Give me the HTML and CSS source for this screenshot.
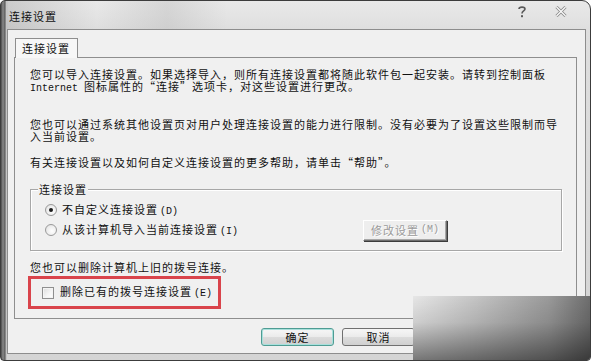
FILE: index.html
```html
<!DOCTYPE html>
<html lang="zh">
<head>
<meta charset="utf-8">
<title>连接设置</title>
<link rel="stylesheet" href="styles.css">
</head>
<body>
<div class="window">
  <div class="titlebar">
    <span class="title">连接设置</span>
    <div class="caption-btns">
      <svg class="help" width="10" height="13" viewBox="0 0 10 13"><path d="M2 4 C2 1.5 8 1.5 8 4 C8 6 5 6 5 8.5" fill="none" stroke="#5a5a5a" stroke-width="1.6"/><rect x="4" y="10.2" width="2" height="2" fill="#5a5a5a"/></svg>
      <svg class="close" width="12" height="11" viewBox="0 0 12 11"><path d="M1.5 1 L10.5 10 M10.5 1 L1.5 10" stroke="#8a8a8a" stroke-width="3"/><path d="M1.5 1 L10.5 10 M10.5 1 L1.5 10" stroke="#fafafa" stroke-width="1.3"/></svg>
    </div>
  </div>
  <div class="client">
    <div class="tabs">
      <div class="tab">连接设置</div>
    </div>
    <div class="page">
      <p class="para p1">您可以导入连接设置。如果选择导入，则所有连接设置都将随此软件包一起安装。请转到控制面板<br><span class="latin">Internet </span>图标属性的“连接”选项卡，对这些设置进行更改。</p>
      <p class="para p2">您也可以通过系统其他设置页对用户处理连接设置的能力进行限制。没有必要为了设置这些限制而导<br>入当前设置。</p>
      <p class="para p3">有关连接设置以及如何自定义连接设置的更多帮助，请单击“帮助”。</p>
      <div class="group">
        <span class="group-title">连接设置</span>
        <div class="row row1">
          <span class="radio checked"></span>
          <span class="label">不自定义连接设置<span class="key">(D)</span></span>
        </div>
        <div class="row row2">
          <div class="radio-cell">
            <span class="radio"></span>
            <span class="label">从该计算机导入当前连接设置<span class="key">(I)</span></span>
          </div>
          <div class="btn3d">修改设置<span class="key">(M)</span></div>
        </div>
      </div>
      <p class="para p4">您也可以删除计算机上旧的拨号连接。</p>
      <div class="redbox">
        <span class="checkbox"></span>
        <span class="label">删除已有的拨号连接设置<span class="key">(E)</span></span>
      </div>
    </div>
    <div class="buttons">
      <div class="btn default">确定</div>
      <div class="btn">取消</div>
    </div>
  </div>
  <div class="smear"></div>
</div>
</body>
</html>
```
FILE: styles.css
```css
html, body {
  margin: 0;
  padding: 0;
}
body {
  width: 593px;
  height: 361px;
  overflow: hidden;
  background: #ffffff;
  font-family: "Noto Sans CJK SC", "Noto Sans", sans-serif;
  font-size: 11px;
  letter-spacing: 1px;
  color: #111;
}
.window {
  box-sizing: border-box;
  width: 591px;
  height: 361px;
  border: 1px solid #3c3c3c;
  border-radius: 5px 9px 4px 4px;
  padding: 0 4px 6px 6px;
  display: flex;
  flex-direction: column;
  position: relative;
  overflow: hidden;
  background:
    linear-gradient(to right, #4a4a4a 0, #8a8a8a 2px, #5c5c5c 4px, #b4b4b4 5px, #d6d6d6 6px, rgba(214,214,214,0) 7px),
    linear-gradient(to bottom, #e9e9e9 0, #dedede 30px, #d4d4d4 100%);
}
.titlebar {
  height: 28px;
  display: flex;
  align-items: center;
  justify-content: space-between;
  background: linear-gradient(to right, rgba(150,150,150,0.35) 0, rgba(230,230,230,0) 90px, rgba(160,160,160,0.25) 160px, rgba(230,230,230,0) 220px);
}
.title {
  margin-left: 2px;
  margin-top: 2px;
  line-height: 12px;
  color: #101010;
}
.caption-btns {
  display: flex;
  align-items: center;
  gap: 28px;
  margin-right: 19px;
  margin-top: -7px;
}
.client {
  box-sizing: border-box;
  height: 325px;
  border: 1px solid #8d8d8d;
  background: #f0f0f0;
  padding: 8px 8px 0 6px;
  display: flex;
  flex-direction: column;
}
.tabs {
  display: flex;
  height: 19px;
  padding-left: 1px;
}
.tab {
  box-sizing: border-box;
  width: 63px;
  height: 20px;
  border: 1px solid #8e8e8e;
  border-bottom: none;
  background: #f7f7f7;
  padding-left: 6px;
  line-height: 19px;
  position: relative;
  z-index: 1;
}
.page {
  box-sizing: border-box;
  height: 262px;
  border: 1px solid #8e8e8e;
  background: #f0f0f0;
  padding: 10px 14px 0 15px;
  display: flex;
  flex-direction: column;
}
.para {
  margin: 0;
  line-height: 12px;
  white-space: nowrap;
}
.latin, .key {
  font-family: "Liberation Mono", monospace;
  font-size: 10px;
  letter-spacing: 0;
}
.key {
  margin-left: 2px;
}
.p2 { margin-top: 23px; }
.p3 { margin-top: 14px; }
.group {
  margin-top: 21px;
  border: 1px solid #a7a7a7;
  box-shadow: inset 1px 1px 0 #ffffff, 1px 1px 0 #ffffff;
  padding: 0 0 9px 14px;
  display: flex;
  flex-direction: column;
  align-items: flex-start;
}
.group-title {
  margin-top: -7px;
  margin-left: -7px;
  padding: 0 1px;
  line-height: 12px;
  background: #f0f0f0;
}
.row {
  display: flex;
  align-items: center;
}
.row1 {
  height: 18px;
  margin-top: 6px;
}
.row2 {
  height: 22px;
}
.radio-cell {
  width: 318px;
  display: flex;
  align-items: center;
}
.label {
  line-height: 12px;
  white-space: nowrap;
}
.radio {
  box-sizing: border-box;
  width: 12px;
  height: 12px;
  border-radius: 50%;
  border: 1px solid #9a9a9a;
  background: radial-gradient(circle at 60% 60%, #ffffff 0, #ececec 60%, #d8d8d8 100%);
  margin-right: 5px;
  position: relative;
  flex: none;
}
.radio.checked::after {
  content: "";
  position: absolute;
  left: 3px;
  top: 3px;
  width: 4px;
  height: 4px;
  border-radius: 50%;
  background: #1a1a1a;
}
.btn3d {
  box-sizing: border-box;
  width: 84px;
  height: 21px;
  border: 1px solid;
  border-color: #ffffff #6e6e6e #6e6e6e #ffffff;
  box-shadow: 1px 1px 0 #3c3c3c, inset -1px -1px 0 #a8a8a8;
  background: #eeeeee;
  color: #9a9a9a;
  text-shadow: 1px 1px 0 #ffffff;
  display: flex;
  align-items: center;
  justify-content: center;
  line-height: 12px;
}
.p4 {
  margin-top: 10px;
}
.redbox {
  box-sizing: border-box;
  width: 193px;
  height: 33px;
  margin-top: 3px;
  margin-left: -2px;
  border: 3px solid #d9444b;
  display: flex;
  align-items: center;
  padding-left: 11px;
}
.checkbox {
  box-sizing: border-box;
  width: 12px;
  height: 12px;
  border: 1px solid #8f8f8f;
  background: linear-gradient(135deg, #dcdcdc 0, #f6f6f6 60%, #ffffff 100%);
  box-shadow: inset 0 0 0 1px #f4f4f4;
  margin-right: 6px;
  flex: none;
}
.buttons {
  display: flex;
  justify-content: flex-end;
  gap: 8px;
  padding-right: 162px;
  margin-top: 9px;
}
.btn {
  box-sizing: border-box;
  width: 73px;
  height: 18px;
  border: 1px solid #707070;
  border-radius: 3px;
  background: linear-gradient(to bottom, #f6f6f6 0, #ebebeb 50%, #dcdcdc 51%, #d0d0d0 100%);
  display: flex;
  align-items: center;
  justify-content: center;
  line-height: 12px;
}
.btn.default {
  border-color: #4f9c93;
  box-shadow: inset 0 0 0 1px #a8e0dc;
}
.smear {
  position: absolute;
  left: 412px;
  top: 295px;
  width: 181px;
  height: 66px;
  background:
    linear-gradient(to bottom, rgba(0,0,0,0) 0%, rgba(0,0,0,0.1) 40%, rgba(0,0,0,0.5) 100%),
    linear-gradient(to right, #e6e6e6 0%, #c4c4c4 35%, #9a9a9a 75%, #6a6a6a 100%);
}
```
